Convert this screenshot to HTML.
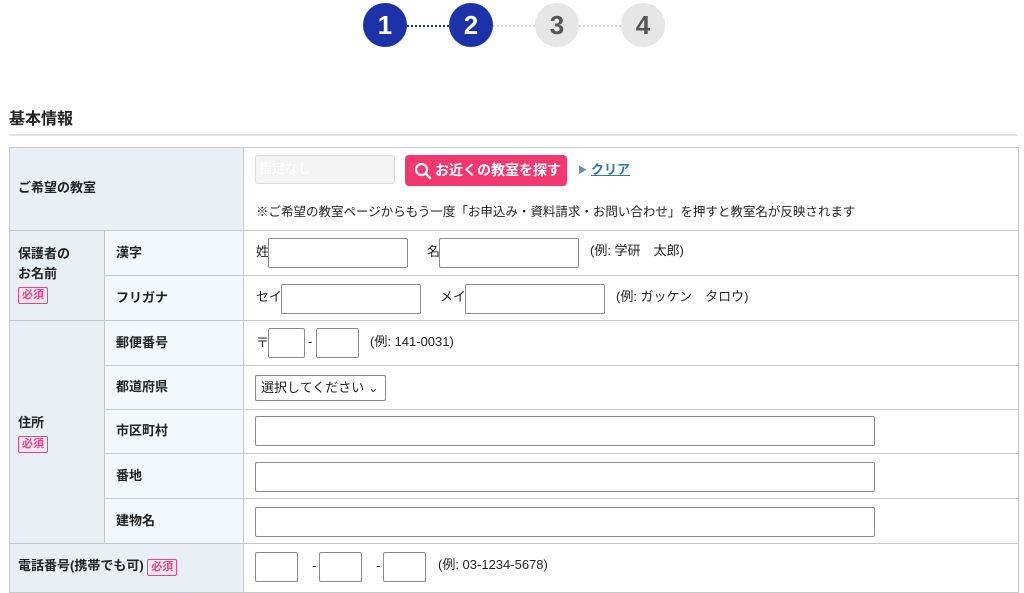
<!DOCTYPE html>
<html><head><meta charset="utf-8"><style>
*{box-sizing:border-box;margin:0;padding:0}
body{width:1024px;height:591px;overflow:hidden;background:#fff;font-family:"Liberation Sans","Noto Sans CJK JP",sans-serif;color:#222;position:relative;line-height:1.15}
.a{position:absolute}
.c{position:absolute;width:44px;height:44px;border-radius:50%;top:3px;font-weight:bold;font-size:26px;text-align:center;line-height:44px}
.on{background:#1b32a8;color:#fff}.off{background:#e6e6e6;color:#555}
.cell{position:absolute;border:1px solid #c8c8c8}
.l1{background:#e8f0f6}.l2{background:#f2f8fc}
.lb{font-size:13px;font-weight:bold;position:absolute}
.in{position:absolute;border:1px solid #8a8a8a;border-radius:2px;background:#fff}
.t{position:absolute;font-size:13px}
.req{display:inline-block;border:1px solid #e8448a;color:#e8448a;background:#fde8f0;font-size:11px;padding:0 3px;line-height:15px;border-radius:2px;font-weight:bold}
</style></head><body>
<div class="a" style="left:407px;top:25px;width:42px;border-top:2px dotted #1b32a8"></div>
<div class="a" style="left:493px;top:25px;width:42px;border-top:2px dotted #ddd"></div>
<div class="a" style="left:579px;top:25px;width:42px;border-top:2px dotted #ddd"></div>
<div class="c on" style="left:363px">1</div>
<div class="c on" style="left:449px">2</div>
<div class="c off" style="left:535px">3</div>
<div class="c off" style="left:621px">4</div>
<div class="a" style="left:9px;top:111px;font-size:16px;font-weight:bold">基本情報</div>
<div class="a" style="left:9px;top:134px;width:1009px;border-top:2px solid #e4e4e4"></div>

<div class="cell l1" style="left:9px;top:147px;width:235px;height:84px"></div>
<div class="cell" style="left:243px;top:147px;width:776px;height:84px"></div>
<div class="lb" style="left:18px;top:181px">ご希望の教室</div>
<div class="a" style="left:255px;top:155px;width:140px;height:29px;background:#f4f4f4;border:1px solid #ddd;border-radius:3px;color:#fff;font-size:13px;padding:6px 3px">指定なし</div>
<div class="a" style="left:405px;top:155px;width:162px;height:31px;background:#f2386f;border-radius:4px;color:#fff;font-size:14px;font-weight:bold;line-height:31px;padding-left:30px">お近くの教室を探す
<svg class="a" style="left:9px;top:7px" width="18" height="18" viewBox="0 0 18 18"><circle cx="7.5" cy="7.5" r="5.5" fill="none" stroke="#fff" stroke-width="2.2"/><path d="M11.5 11.5L16 16" stroke="#fff" stroke-width="2.4" stroke-linecap="round"/></svg></div>
<div class="t" style="left:578px;top:165px;color:#5a8fc0;font-size:9px">▶</div>
<div class="t" style="left:591px;top:163px;color:#2a7ab8;text-decoration:underline;font-weight:bold">クリア</div>
<div class="t" style="left:256px;top:205px;font-size:12.5px">※ご希望の教室ページからもう一度「お申込み・資料請求・お問い合わせ」を押すと教室名が反映されます</div>

<div class="cell l1" style="left:9px;top:230px;width:96px;height:91px"></div>
<div class="lb" style="left:18px;top:244px;line-height:20px">保護者の<br>お名前<br><span class="req">必須</span></div>
<div class="cell l2" style="left:104px;top:230px;width:140px;height:46px"></div>
<div class="cell" style="left:243px;top:230px;width:776px;height:46px"></div>
<div class="lb" style="left:116px;top:246px">漢字</div>
<div class="t" style="left:256px;top:245px">姓</div><div class="in" style="left:268px;top:238px;width:140px;height:30px"></div>
<div class="t" style="left:427px;top:245px">名</div><div class="in" style="left:439px;top:238px;width:140px;height:30px"></div>
<div class="t" style="left:590px;top:244px">(例: 学研　太郎)</div>
<div class="cell l2" style="left:104px;top:275px;width:140px;height:46px"></div>
<div class="cell" style="left:243px;top:275px;width:776px;height:46px"></div>
<div class="lb" style="left:116px;top:291px">フリガナ</div>
<div class="t" style="left:256px;top:290px">セイ</div><div class="in" style="left:281px;top:284px;width:140px;height:30px"></div>
<div class="t" style="left:440px;top:290px">メイ</div><div class="in" style="left:465px;top:284px;width:140px;height:30px"></div>
<div class="t" style="left:616px;top:290px">(例: ガッケン　タロウ)</div>

<div class="cell l1" style="left:9px;top:320px;width:96px;height:224px"></div>
<div class="lb" style="left:18px;top:413px;line-height:20px">住所<br><span class="req">必須</span></div>
<div class="cell l2" style="left:104px;top:320px;width:140px;height:46px"></div><div class="cell" style="left:243px;top:320px;width:776px;height:46px"></div>
<div class="lb" style="left:116px;top:336px">郵便番号</div>
<div class="t" style="left:256px;top:336px">〒</div><div class="in" style="left:268px;top:328px;width:37px;height:30px"></div>
<div class="t" style="left:308px;top:335px">-</div><div class="in" style="left:316px;top:328px;width:43px;height:30px"></div>
<div class="t" style="left:370px;top:335px">(例: 141-0031)</div>
<div class="cell l2" style="left:104px;top:365px;width:140px;height:45px"></div><div class="cell" style="left:243px;top:365px;width:776px;height:45px"></div>
<div class="lb" style="left:116px;top:380px">都道府県</div>
<div class="in" style="left:255px;top:375px;width:131px;height:26px;font-size:13px;padding:5px 5px">選択してください ⌄</div>
<div class="cell l2" style="left:104px;top:409px;width:140px;height:45px"></div><div class="cell" style="left:243px;top:409px;width:776px;height:45px"></div>
<div class="lb" style="left:116px;top:424px">市区町村</div>
<div class="in" style="left:255px;top:416px;width:620px;height:30px"></div>
<div class="cell l2" style="left:104px;top:453px;width:140px;height:46px"></div><div class="cell" style="left:243px;top:453px;width:776px;height:46px"></div>
<div class="lb" style="left:116px;top:469px">番地</div>
<div class="in" style="left:255px;top:462px;width:620px;height:30px"></div>
<div class="cell l2" style="left:104px;top:498px;width:140px;height:46px"></div><div class="cell" style="left:243px;top:498px;width:776px;height:46px"></div>
<div class="lb" style="left:116px;top:514px">建物名</div>
<div class="in" style="left:255px;top:507px;width:620px;height:30px"></div>

<div class="cell l1" style="left:9px;top:543px;width:235px;height:50px"></div><div class="cell" style="left:243px;top:543px;width:776px;height:50px"></div>
<div class="lb" style="left:18px;top:559px">電話番号(携帯でも可) <span class="req">必須</span></div>
<div class="in" style="left:255px;top:552px;width:43px;height:30px"></div><div class="t" style="left:312px;top:559px">-</div>
<div class="in" style="left:319px;top:552px;width:43px;height:30px"></div><div class="t" style="left:376px;top:559px">-</div>
<div class="in" style="left:383px;top:552px;width:43px;height:30px"></div>
<div class="t" style="left:438px;top:558px">(例: 03-1234-5678)</div>
</body></html>
